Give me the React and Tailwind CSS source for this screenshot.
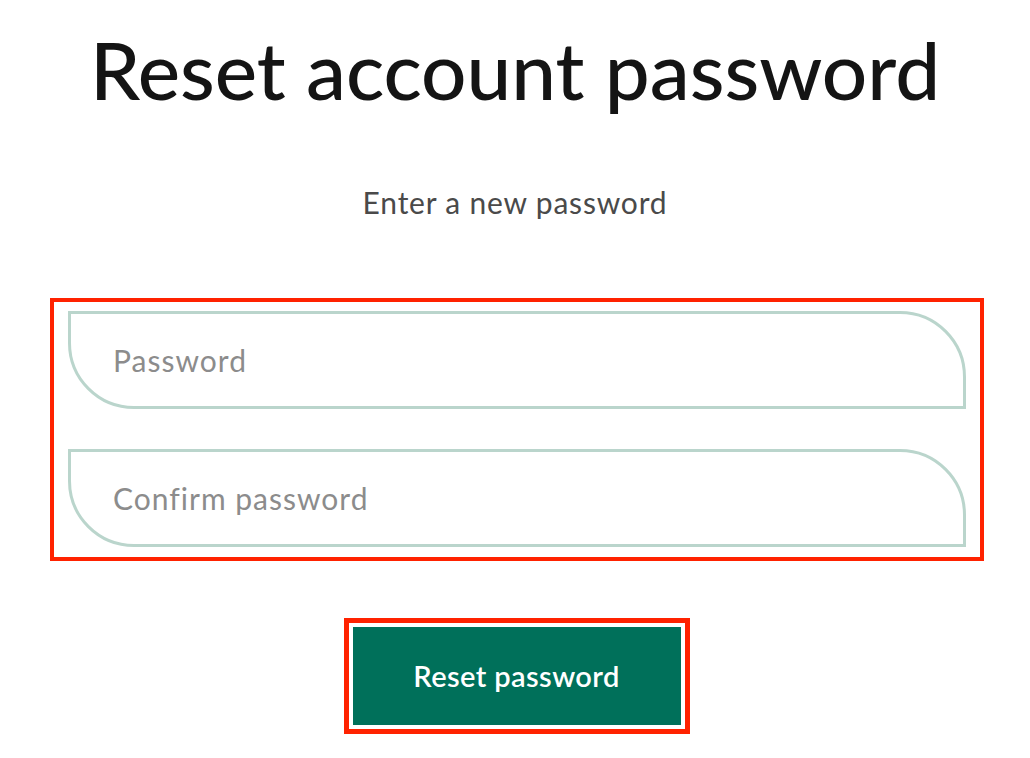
import React from "react";

export default function App() {
  const font = { fontFamily: "Lato, 'Noto Sans', sans-serif" };
  return (
    <div className="min-h-screen bg-white flex flex-col items-center" style={font}>
      <h1 className="mt-[21px] text-[80px] leading-[96px] font-medium text-[#141414]">
        Reset account password
      </h1>
      <p className="mt-[65px] text-[30px] leading-[40px] tracking-[0.8px] text-[#4a4a4a]">Enter a new password</p>
      <div className="mt-[76px] ml-[4px] w-[934px] border-4 border-[#ff2200] px-[14px] pt-[9px] pb-[10px] flex flex-col gap-[40px]">
        <input
          type="password"
          placeholder="Password"
          className="h-[98px] w-full border-[3px] border-[#bad5cc] rounded-tr-[66px] rounded-bl-[66px] pl-[42px] text-[30px] tracking-[1px] text-[#333] placeholder:text-[#8c8c8c] outline-none bg-white"
          style={font}
        />
        <input
          type="password"
          placeholder="Confirm password"
          className="h-[98px] w-full border-[3px] border-[#bad5cc] rounded-tr-[66px] rounded-bl-[66px] pl-[42px] text-[30px] tracking-[1px] text-[#333] placeholder:text-[#8c8c8c] outline-none bg-white"
          style={font}
        />
      </div>
      <div className="mt-[57px] ml-[3px] border-[5px] border-[#ff2200] p-[4px]">
        <button
          className="w-[328px] h-[98px] bg-[#00705a] text-white text-[29px] tracking-[0.4px] font-semibold"
          style={font}
        >
          Reset password
        </button>
      </div>
    </div>
  );
}
